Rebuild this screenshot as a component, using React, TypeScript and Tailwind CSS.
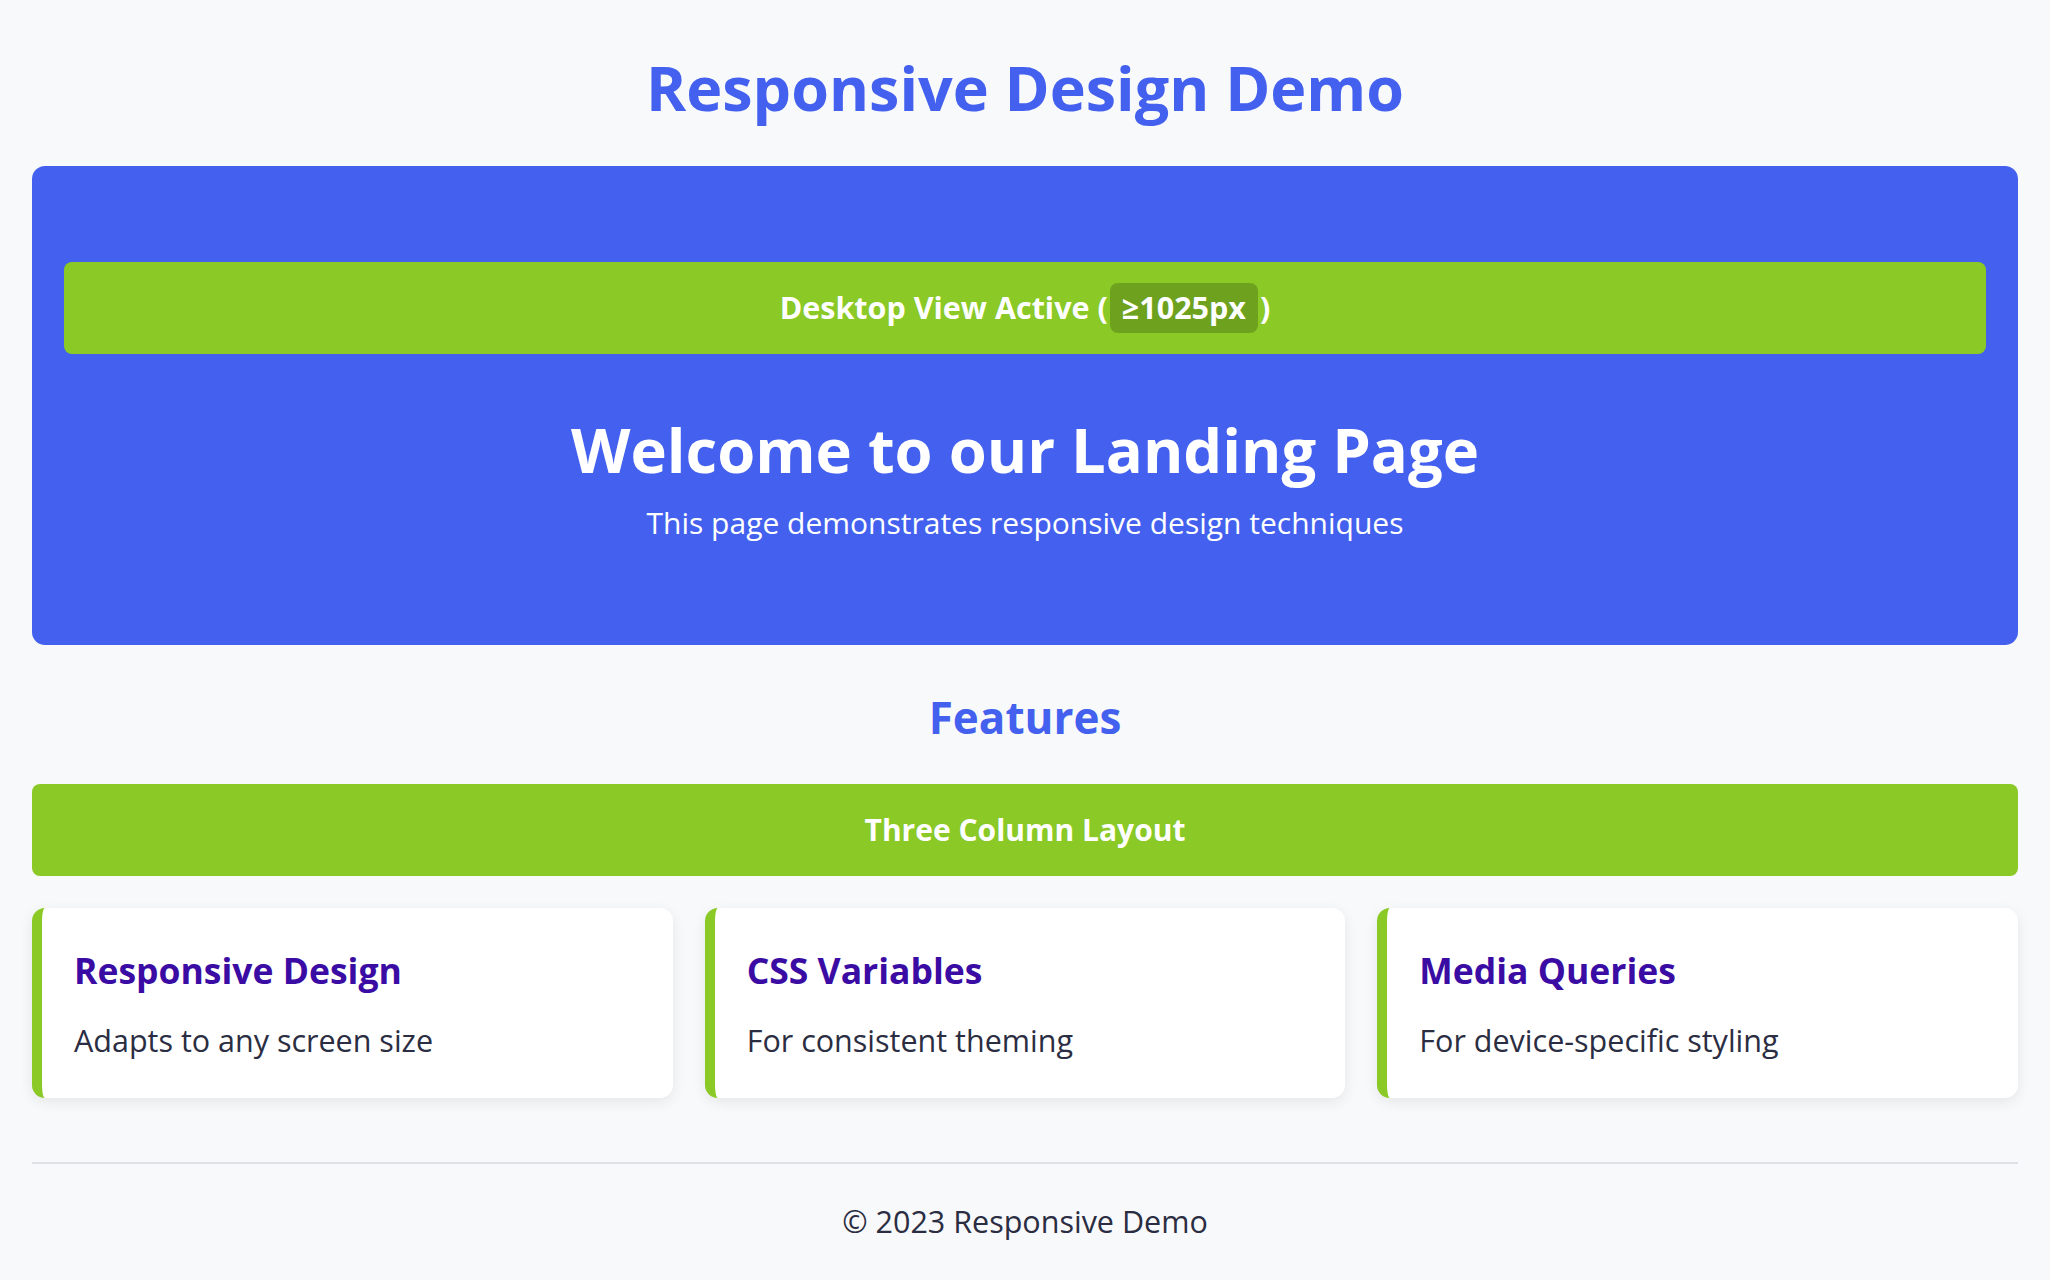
import React from 'react';

const features = [
  { title: 'Responsive Design', text: 'Adapts to any screen size' },
  { title: 'CSS Variables', text: 'For consistent theming' },
  { title: 'Media Queries', text: 'For device-specific styling' },
];

const FeatureCard: React.FC<{ title: string; text: string }> = ({ title, text }) => (
  <div className="bg-white rounded-[13px] border-l-[10px] border-[#8ac926] shadow-[0_4px_14px_rgba(0,0,0,0.08)] pl-[32px] pr-8 pt-[45px] pb-[42px]">
    <h3 className="text-[35.5px] leading-none font-bold text-[#3a0ca3]">{title}</h3>
    <p className="mt-[37px] text-[30.5px] leading-none text-[#2b2d42]">{text}</p>
  </div>
);

export default function App() {
  return (
    <div
      className="min-h-screen bg-[#f8f9fa] px-8"
      style={{ fontFamily: '"Open Sans", "Noto Sans", sans-serif' }}
    >
      <header className="pt-[57px] pb-[48px] text-center">
        <h1 className="text-[61px] leading-none font-bold text-[#4361ee]">Responsive Design Demo</h1>
      </header>

      <section className="bg-[#4361ee] rounded-[13px] px-8 pt-[96px] pb-[107px] text-center text-white">
        <div className="h-[92px] rounded-lg bg-[#8ac926] flex items-center justify-center text-[30.5px] font-bold">
          <span>Desktop View Active (</span>
          <span className="mx-[2px] rounded-lg bg-[#6ea11e] px-[12px] h-[50px] flex items-center">≥1025px</span>
          <span>)</span>
        </div>
        <h2 className="mt-[65px] text-[61.5px] leading-none font-bold">Welcome to our Landing Page</h2>
        <p className="mt-[27px] text-[30px] leading-none">This page demonstrates responsive design techniques</p>
      </section>

      <section>
        <h2 className="mt-[50px] text-center text-[44px] leading-none font-bold text-[#4361ee]">Features</h2>
        <div className="mt-[45px] h-[92px] rounded-lg bg-[#8ac926] flex items-center justify-center text-[30px] font-bold text-white">
          Three Column Layout
        </div>
        <div className="mt-8 grid grid-cols-3 gap-8">
          {features.map((f) => (
            <FeatureCard key={f.title} title={f.title} text={f.text} />
          ))}
        </div>
      </section>

      <footer className="mt-[64px] border-t-2 border-[#dee2e6] pt-[42px] pb-8 text-center">
        <p className="text-[30.5px] leading-none text-[#2b2d42]">© 2023 Responsive Demo</p>
      </footer>
    </div>
  );
}
